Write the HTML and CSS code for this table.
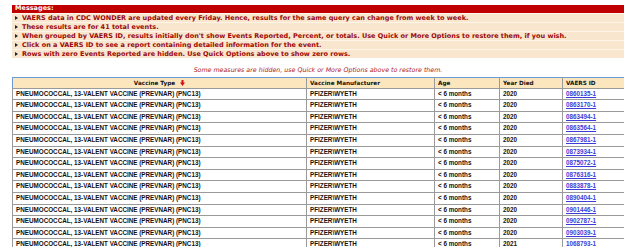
FILE: index.html
```html
<!DOCTYPE html>
<html>
<head>
<meta charset="utf-8">
<link rel="stylesheet" href="styles.css">
</head>
<body>
<div class="page">
  <div class="messages">
    <div class="msg-head">Messages:</div>
    <div class="msg-row"><span class="bullet"></span>VAERS data in CDC WONDER are updated every Friday. Hence, results for the same query can change from week to week.</div>
    <div class="msg-row"><span class="bullet"></span>These results are for 41 total events.</div>
    <div class="msg-row"><span class="bullet"></span>When grouped by VAERS ID, results initially don't show Events Reported, Percent, or totals. Use Quick or More Options to restore them, if you wish.</div>
    <div class="msg-row"><span class="bullet"></span>Click on a VAERS ID to see a report containing detailed information for the event.</div>
    <div class="msg-row"><span class="bullet"></span>Rows with zero Events Reported are hidden. Use Quick Options above to show zero rows.</div>
  </div>
  <div class="note">Some measures are hidden, use Quick or More Options above to restore them.</div>
  <table class="results">
    <colgroup>
      <col class="c1"><col class="c2"><col class="c3"><col class="c4"><col class="c5">
    </colgroup>
    <thead>
      <tr>
        <th class="center">Vaccine Type <svg class="arrow" width="5" height="6" viewBox="0 0 5 6"><rect x="1.5" y="0" width="2" height="3" fill="#d41010"/><polygon points="0,2.6 5,2.6 2.5,6" fill="#d41010"/></svg></th>
        <th>Vaccine Manufacturer</th>
        <th>Age</th>
        <th>Year Died</th>
        <th>VAERS ID</th>
      </tr>
    </thead>
    <tbody>
      <tr><td>PNEUMOCOCCAL, 13-VALENT VACCINE (PREVNAR) (PNC13)</td><td>PFIZER\WYETH</td><td>&lt; 6 months</td><td>2020</td><td><a href="#">0860135-1</a></td></tr>
      <tr><td>PNEUMOCOCCAL, 13-VALENT VACCINE (PREVNAR) (PNC13)</td><td>PFIZER\WYETH</td><td>&lt; 6 months</td><td>2020</td><td><a href="#">0863170-1</a></td></tr>
      <tr><td>PNEUMOCOCCAL, 13-VALENT VACCINE (PREVNAR) (PNC13)</td><td>PFIZER\WYETH</td><td>&lt; 6 months</td><td>2020</td><td><a href="#">0863494-1</a></td></tr>
      <tr><td>PNEUMOCOCCAL, 13-VALENT VACCINE (PREVNAR) (PNC13)</td><td>PFIZER\WYETH</td><td>&lt; 6 months</td><td>2020</td><td><a href="#">0863564-1</a></td></tr>
      <tr><td>PNEUMOCOCCAL, 13-VALENT VACCINE (PREVNAR) (PNC13)</td><td>PFIZER\WYETH</td><td>&lt; 6 months</td><td>2020</td><td><a href="#">0867981-1</a></td></tr>
      <tr><td>PNEUMOCOCCAL, 13-VALENT VACCINE (PREVNAR) (PNC13)</td><td>PFIZER\WYETH</td><td>&lt; 6 months</td><td>2020</td><td><a href="#">0873934-1</a></td></tr>
      <tr><td>PNEUMOCOCCAL, 13-VALENT VACCINE (PREVNAR) (PNC13)</td><td>PFIZER\WYETH</td><td>&lt; 6 months</td><td>2020</td><td><a href="#">0875072-1</a></td></tr>
      <tr><td>PNEUMOCOCCAL, 13-VALENT VACCINE (PREVNAR) (PNC13)</td><td>PFIZER\WYETH</td><td>&lt; 6 months</td><td>2020</td><td><a href="#">0876316-1</a></td></tr>
      <tr><td>PNEUMOCOCCAL, 13-VALENT VACCINE (PREVNAR) (PNC13)</td><td>PFIZER\WYETH</td><td>&lt; 6 months</td><td>2020</td><td><a href="#">0883878-1</a></td></tr>
      <tr><td>PNEUMOCOCCAL, 13-VALENT VACCINE (PREVNAR) (PNC13)</td><td>PFIZER\WYETH</td><td>&lt; 6 months</td><td>2020</td><td><a href="#">0890404-1</a></td></tr>
      <tr><td>PNEUMOCOCCAL, 13-VALENT VACCINE (PREVNAR) (PNC13)</td><td>PFIZER\WYETH</td><td>&lt; 6 months</td><td>2020</td><td><a href="#">0901446-1</a></td></tr>
      <tr><td>PNEUMOCOCCAL, 13-VALENT VACCINE (PREVNAR) (PNC13)</td><td>PFIZER\WYETH</td><td>&lt; 6 months</td><td>2020</td><td><a href="#">0902787-1</a></td></tr>
      <tr><td>PNEUMOCOCCAL, 13-VALENT VACCINE (PREVNAR) (PNC13)</td><td>PFIZER\WYETH</td><td>&lt; 6 months</td><td>2020</td><td><a href="#">0903039-1</a></td></tr>
      <tr><td>PNEUMOCOCCAL, 13-VALENT VACCINE (PREVNAR) (PNC13)</td><td>PFIZER\WYETH</td><td>&lt; 6 months</td><td>2021</td><td><a href="#">1068793-1</a></td></tr>
    </tbody>
  </table>
</div>
</body>
</html>
```
FILE: styles.css
```css
html, body {
  margin: 0;
  padding: 0;
  overflow: hidden;
  background: #ffffff;
}
.page {
  padding: 5px 0 0 12px;
  width: 640px;
}
.messages {
  width: 628px;
  font-family: "DejaVu Sans", Verdana, sans-serif;
  font-weight: bold;
  font-size: 6.5px;
}
.msg-head {
  background: #c00000;
  color: #ffffff;
  height: 7.6px;
  line-height: 7.6px;
  padding-left: 3px;
}
.msg-row {
  background: #f9e6cf;
  color: #990808;
  border-top: 1px solid #fff4e8;
  height: 8px;
  line-height: 8px;
  padding-left: 3px;
  white-space: nowrap;
}
.bullet {
  display: inline-block;
  width: 0;
  height: 0;
  border-left: 3px solid #222;
  border-top: 2px solid transparent;
  border-bottom: 2px solid transparent;
  margin-right: 4px;
  vertical-align: 0;
}
.note {
  width: 612px;
  text-align: center;
  font-family: "DejaVu Sans", Verdana, sans-serif;
  font-style: italic;
  font-size: 6.3px;
  color: #b01818;
  margin-top: 8px;
  height: 11px;
  line-height: 8px;
}
.results {
  border-collapse: collapse;
  table-layout: fixed;
  width: 630px;
}
.c1 { width: 294px; }
.c2 { width: 128px; }
.c3 { width: 65px; }
.c4 { width: 63px; }
.c5 { width: 80px; }
.results th {
  background: #fce6bd;
  border: 1px solid #9a9a9a;
  border-top: 1px solid #6a9ad8;
  font-family: "DejaVu Sans", Verdana, sans-serif;
  font-weight: bold;
  font-size: 5.7px;
  color: #111;
  text-align: left;
  padding: 0 3px;
  height: 10px;
  line-height: 10px;
}
.results th:first-child {
  border-left: 1px solid #6a9ad8;
}
.results th.center {
  text-align: center;
}
.arrow {
  vertical-align: -1px;
  margin-left: 3px;
}
.results td {
  border: 1px solid #9a9a9a;
  font-family: "Liberation Sans", Arial, sans-serif;
  font-weight: bold;
  font-size: 6.3px;
  color: #111;
  padding: 0 3px;
  height: 10.6px;
  line-height: 10.6px;
  white-space: nowrap;
  overflow: hidden;
}
.results a {
  color: #3c3cd8;
  text-decoration: underline;
}
```
